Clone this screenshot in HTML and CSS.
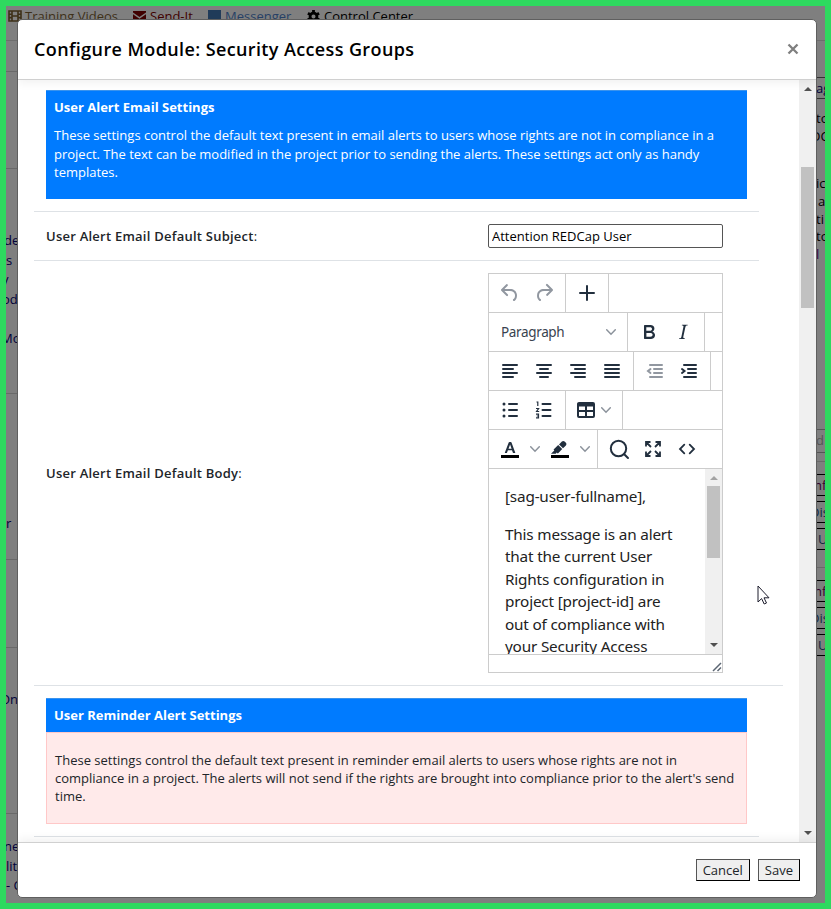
FILE: index.html
```html
<!DOCTYPE html>
<html lang="en">
<head>
<meta charset="utf-8">
<title>Configure Module</title>
<link rel="stylesheet" href="styles.css">
</head>
<body>
<div class="page">
  <nav class="topnav">
    <span class="nav-item training"><svg width="14" height="12" viewBox="0 0 14 12"><path d="M1 1h12v10H1zM4 1v10M10 1v10M4 6h6M1 4.3h3M1 7.6h3M10 4.3h3M10 7.6h3" fill="none" stroke="currentColor" stroke-width="1.6"/></svg>Training Videos</span>
    <span class="nav-item sendit"><svg width="13" height="10" viewBox="0 0 13 10"><path d="M0 0h13v1.6L6.500 6 0 1.600zM0 3.200l6.500 4.500L13 3.200V10H0z" fill="#400000"/></svg>Send-It</span>
    <span class="nav-item messenger"><i class="square"></i>Messenger</span>
    <span class="nav-item control"><svg width="13" height="13" viewBox="0 0 14 14"><circle cx="7" cy="7" r="3.700" fill="none" stroke="#000" stroke-width="3"/><path d="M7 0v3M7 11v3M1 3.500l2.500 1.500M13 3.500L10.500 5M1 10.500L3.500 9M13 10.500L10.500 9" stroke="#000" stroke-width="3"/></svg>Control Center</span>
  </nav>
  <div class="columns">
    <aside class="side left">
      <section class="l1"></section><section class="l2"></section><section class="l3"></section>
      <section class="l4"><p class="in3">de</p><p>s</p><p class="in4">y</p><p class="in4">oda</p><p></p><p class="in5">Mo</p></section>
      <section class="l5"><p>r</p></section><section class="l6"></section>
      <section class="l7"><p class="in6">On</p></section>
      <section class="l8"><p class="in3">ne</p><p>lit</p><p>- C</p></section>
    </aside>
    <aside class="side right">
      <section class="r1"></section>
      <div class="tab">ag</div>
      <section class="r2"><p>to</p><p class="in5">DC</p></section>
      <section class="r3"><p>ic</p><p class="in2">a</p><p>ti</p><p>to</p><p class="purple">l</p></section>
      <div class="field">d</div>
      <section class="r4"><b class="red in3">nf</b><b class="in6">Dis</b><b class="in2">U</b></section>
      <section class="r4"><b class="red in3">nf</b><b class="in6">Dis</b><b class="in2">U</b></section>
    </aside>
  </div>
</div>

<div class="modal">
  <header class="modal-header"><h1>Configure Module: Security Access Groups</h1><svg class="close" width="12" height="12" viewBox="0 0 12 12"><path d="M1.500 1.500l9 9M10.500 1.500l-9 9" stroke="#7f7f7f" stroke-width="2.300"/></svg></header>
  <div class="modal-body">
    <main class="content">
      <div class="row info">
        <div class="blue-box"><h2>User Alert Email Settings</h2><p>These settings control the default text present in email alerts to users whose rights are not in compliance in a<br>project. The text can be modified in the project prior to sending the alerts. These settings act only as handy<br>templates.</p></div>
      </div>
      <div class="row subject"><label><strong>User Alert Email Default Subject</strong>:</label><input type="text" value="Attention REDCap User"></div>
      <div class="row mail-body">
        <label><strong>User Alert Email Default Body</strong>:</label>
        <div class="editor">
          <div class="bar">
            <div class="group">
              <span class="btn off"><svg viewBox="0 0 24 24"><path d="M6.400 8H12c3.700 0 6.200 2 6.800 5.100.6 2.700-.4 5.600-2.300 6.800a1 1 0 01-1-1.800c1.100-.6 1.800-2.700 1.400-4.600-.5-2.100-2.100-3.500-4.900-3.500H6.400l3.300 3.300a1 1 0 11-1.400 1.400l-5-5a1 1 0 010-1.400l5-5a1 1 0 011.400 1.400L6.400 8z"/></svg></span>
              <span class="btn off"><svg viewBox="0 0 24 24"><path d="M17.600 10H12c-2.800 0-4.400 1.400-4.900 3.500-.4 2 .3 4 1.400 4.600a1 1 0 11-1 1.800c-2-1.200-2.900-4.100-2.300-6.800.6-3 3-5.100 6.800-5.100h5.600l-3.300-3.300a1 1 0 111.400-1.400l5 5a1 1 0 010 1.400l-5 5a1 1 0 01-1.400-1.400l3.300-3.300z"/></svg></span>
            </div>
            <div class="group"><span class="btn"><svg viewBox="0 0 24 24"><path class="ln" d="M12 5v14M5 12h14"/></svg></span></div>
          </div>
          <div class="bar">
            <div class="group"><span class="select">Paragraph<svg class="chev" viewBox="0 0 10 10"><path d="M.7 2.800L5 7.200l4.300-4.400"/></svg></span></div>
            <div class="group">
              <span class="btn"><svg viewBox="0 0 24 24"><path d="M7.800 19c-.3 0-.5 0-.6-.2l-.2-.5V5.700c0-.2 0-.4.2-.5l.6-.2h5c1.500 0 2.700.3 3.500 1 .7.6 1.100 1.400 1.100 2.500a3 3 0 01-.6 1.900c-.4.6-1 1-1.600 1.200.4.1.9.3 1.300.6s.8.7 1 1.200c.4.4.5 1 .5 1.600 0 1.300-.4 2.300-1.300 3-.8.7-2.100 1-3.800 1H7.800zm5-8.300c.6 0 1.200-.1 1.600-.5.4-.3.6-.7.6-1.300 0-1.100-.8-1.700-2.300-1.700H9.300v3.500h3.400zm.5 6c.7 0 1.300-.1 1.700-.4.4-.4.6-.9.6-1.500s-.2-1-.7-1.400c-.4-.3-1-.4-2-.4H9.400v3.800h4z"/></svg></span>
              <span class="btn"><svg viewBox="0 0 24 24"><path d="M16.700 4.700l-.1.900h-.3c-.6 0-1 0-1.400.3-.3.3-.4.6-.5 1.100l-2.100 9.800v.6c0 .5.400.8 1.400.8h.2l-.2.800H8l.2-.8h.2c1.100 0 1.800-.5 2-1.500l2-9.800.1-.5c0-.6-.4-.8-1.400-.8h-.3l.2-.9h5.800z"/></svg></span>
            </div>
          </div>
          <div class="bar">
            <div class="group">
              <span class="btn"><svg viewBox="0 0 24 24"><path class="ln" d="M5 6h14M5 10h10M5 14h14M5 18h10"/></svg></span>
              <span class="btn"><svg viewBox="0 0 24 24"><path class="ln" d="M5 6h14M8 10h8M5 14h14M8 18h8"/></svg></span>
              <span class="btn"><svg viewBox="0 0 24 24"><path class="ln" d="M5 6h14M9 10h10M5 14h14M9 18h10"/></svg></span>
              <span class="btn"><svg viewBox="0 0 24 24"><path class="ln" d="M5 6h14M5 10h14M5 14h14M5 18h14"/></svg></span>
            </div>
            <div class="group">
              <span class="btn off"><svg viewBox="0 0 24 24"><path class="ln" d="M7 6h12M11 10h8M11 14h8M7 18h12M7.500 10L5 12l2.500 2"/></svg></span>
              <span class="btn"><svg viewBox="0 0 24 24"><path class="ln" d="M7 6h12M11 10h8M11 14h8M7 18h12M5 10l2.500 2L5 14"/></svg></span>
            </div>
          </div>
          <div class="bar">
            <div class="group">
              <span class="btn"><svg viewBox="0 0 24 24"><path class="ln" d="M11 6h8M11 12h8M11 18h8"/><circle cx="6" cy="6" r="1.500"/><circle cx="6" cy="12" r="1.500"/><circle cx="6" cy="18" r="1.500"/></svg></span>
              <span class="btn"><svg viewBox="0 0 24 24"><path class="ln" d="M10.500 6h8M10.500 12h8M10.500 18h8"/><path class="thin" d="M4.500 4h1.300v4M4 10.500h2.600L4.600 13.500h2.600M4 16.200h2.500v3.600H4M4.700 18h1.700"/></svg></span>
            </div>
            <div class="group"><span class="btn wide"><svg viewBox="0 0 24 24"><path fill-rule="evenodd" d="M5 4h14a2 2 0 012 2v12a2 2 0 01-2 2H5a2 2 0 01-2-2V6c0-1.100.9-2 2-2zm0 4.500V12h6V8.500zm8 0V12h6V8.500zM5 14v4h6v-4zm8 0v4h6v-4z"/></svg><svg class="chev" viewBox="0 0 10 10"><path d="M.7 2.800L5 7.200l4.300-4.400"/></svg></span></div>
          </div>
          <div class="bar">
            <div class="group">
              <span class="btn split"><svg viewBox="0 0 24 24"><path fill="#000" d="M3 18h18v3H3z"/><path fill-rule="evenodd" d="M8.700 16H7.100c-.2 0-.3-.2-.2-.4l3.800-10c.1-.4.4-.6.8-.6h1.300c.4 0 .6.2.7.600l3.700 10c.1.2 0 .4-.3.4h-1.600l-.4-.300-.9-2.500H9.900L9 15.700zM12.100 7.600l-1.600 4.100h3.100z"/></svg><svg class="chev" viewBox="0 0 10 10"><path d="M.7 2.800L5 7.200l4.300-4.400"/></svg></span>
              <span class="btn split"><svg viewBox="0 0 24 24"><path fill="#000" d="M3 18h18v3H3z"/><path d="M7.700 16.700H3l3.300-3.300-.7-.8L10.200 8l4 4.100-4 4.200c-.2.2-.6.2-.8 0l-.6-.7zm5-7.600L11 7.400l2.900-2.900a2 2 0 012.700 0l1.300 1.300a2 2 0 010 2.700L15 11.300z"/></svg><svg class="chev" viewBox="0 0 10 10"><path d="M.7 2.800L5 7.200l4.300-4.400"/></svg></span>
            </div>
            <div class="group last">
              <span class="btn"><svg viewBox="0 0 24 24"><circle class="ln" cx="11.500" cy="11.500" r="7.700"/><path class="ln" d="M17.200 17.200L21 21"/></svg></span>
              <span class="btn"><svg viewBox="0 0 24 24"><path class="mid" d="M9.500 5H5v4.500M5.500 5.500L10 10M14.500 5H19v4.500M18.500 5.500L14 10M9.500 19H5v-4.500M5.500 18.500L10 14M14.500 19H19v-4.500M18.500 18.500L14 14"/></svg></span>
              <span class="btn"><svg viewBox="0 0 24 24"><path class="mid round" d="M9.300 7.700L5 12l4.300 4.300M14.700 7.700L19 12l-4.300 4.300"/></svg></span>
            </div>
          </div>
          <div class="edit-area">
            <div class="edit-text"><p>[sag-user-fullname],</p><p>This message is an alert<br>that the current User<br>Rights configuration in<br>project [project-id] are<br>out of compliance with<br>your Security Access</p></div>
            <div class="scroll"><i class="up pale"></i><i class="thumb"></i><i class="down"></i></div>
          </div>
          <div class="status"><svg width="10" height="10" viewBox="0 0 10 10"><path d="M1 9l8-8M5.500 9L9 5.500" stroke="#5c6673" stroke-width="1.500"/></svg></div>
        </div>
      </div>
      <div class="row reminder">
        <div class="blue-head"><h2>User Reminder Alert Settings</h2></div>
        <div class="pink-box">These settings control the default text present in reminder email alerts to users whose rights are not in<br>compliance in a project. The alerts will not send if the rights are brought into compliance prior to the alert's send<br>time.</div>
      </div>
    </main>
    <div class="scroll outer"><i class="up"></i><i class="thumb"></i><i class="down"></i></div>
  </div>
  <footer class="modal-footer"><button>Cancel</button><button>Save</button></footer>
</div>
<svg class="cursor" width="13" height="20" viewBox="0 0 13 20"><path d="M1 1v16l3.600-3.400 2.600 5.400 2.300-1-2.500-5.200H12z" fill="#fff" stroke="#1c1c2c"/></svg>
</body>
</html>
```
FILE: styles.css
```css
* { box-sizing: border-box; }
body { margin: 0; width: 831px; height: 909px; overflow: hidden; position: relative; font: 13px/18px "Open Sans", sans-serif; color: #212529; }
h1, h2, p { margin: 0; }
.page { width: 831px; height: 909px; border: 6px solid #2ed95f; background: #7f7f7f; overflow: hidden; display: flex; flex-direction: column; }
.topnav { flex: none; height: 35px; display: flex; padding: 0 0 0 2px; border-bottom: 1px solid #6d6d6d; }
.nav-item { display: flex; gap: 4px; height: 20px; align-items: center; white-space: nowrap; }
.training { width: 125px; color: #3e3018; gap: 3px; }
.sendit { width: 75px; color: #400000; }
.messenger { width: 99px; color: #263f66; }
.control { color: #000; }
.square { width: 13px; height: 12px; background: #203b59; }
.columns { flex: 1; min-height: 0; display: flex; justify-content: space-between; }
.side { width: 12px; overflow: hidden; color: #000038; white-space: nowrap; }
.side section { border-bottom: 1px solid #696969; }
.side p { height: 19.500px; line-height: 19px; }
.left section { overflow: hidden; }
.side .l1 { height: 0; border: 0; }
.l2 { height: 31px; }
.l3 { height: 97px; }
.l4 { height: 225px; padding-top: 62px; }
.l5 { height: 166px; padding-top: 120px; }
.l6 { height: 88px; }
.l7 { height: 166px; padding-top: 42px; }
.l8 { height: 95px; padding-top: 23px; }
.in2 { text-indent: 2px; }
.in3 { text-indent: -2px; }
.in4 { text-indent: -4px; }
.in5 { text-indent: -5px; }
.in6 { text-indent: -6px; }
.side.right { width: 9px; color: #000; }
.side .r1 { height: 36px; border: 0; }
.tab { height: 22px; border: solid #333; border-width: 1px 0; line-height: 20px; color: #000038; }
.side.right section.r2, .side.right section.r3 { border: 0; }
.right p { height: 17.800px; line-height: 18px; }
.r2 { height: 75px; padding-top: 10px; }
.r3 { height: 255px; }
.purple { color: #300040; }
.field { height: 24px; border: 1px solid #555; border-width: 1px 0; line-height: 21px; color: #555; margin-bottom: 8px; }
.r4 { height: 106px; padding-top: 12px; }
.side.right .r4 { border-top: 1px solid #696969; border-bottom: 0; }
.right b { display: block; height: 22px; margin-bottom: 5px; border: solid #000; border-width: 1px 0; line-height: 20px; font-weight: 400; color: #102840; }
.right b.red { color: #30002c; }

.modal { position: absolute; left: 17px; top: 19px; width: 800px; height: 879px; border: 1px solid #5f5f5f; border-radius: 5px; background: #fff; display: flex; flex-direction: column; overflow: hidden; }
.modal-header { height: 60px; border-bottom: 1px solid #d0d0d0; display: flex; align-items: center; justify-content: space-between; padding: 0 17px 0 16px; position: relative; box-shadow: 0 3px 9px rgba(0,0,0,.06); }
.modal-header h1 { font: 600 18px/27px "Open Sans", sans-serif; letter-spacing: .38px; color: #000; }
.close { margin-top: -2px; }
.modal-body { height: 762px; display: flex; overflow: hidden; }
.content { flex: 1; padding-left: 16px; }
.row { width: 725px; border-bottom: 1px solid #dee2e6; padding: 0 12px; display: flex; align-items: center; }
.row.info { height: 132px; align-items: flex-start; padding-top: 10px; }
.blue-box { width: 701px; height: 109px; background: #007bff; color: #fff; padding: 7px 8px; border-top: 1px solid #3a93ed; }
h2 { font: 700 13px/18px "Open Sans", sans-serif; color: #fff; }
.blue-box p { margin-top: 10px; line-height: 18.500px; white-space: nowrap; }
.row.subject { height: 49px; }
label { width: 442px; }
strong { font-weight: 600; letter-spacing: .24px; }
input { width: 235px; height: 24px; border: 1px solid #555; border-radius: 2px; padding: 0 3px 1px; font: 13px "Open Sans", sans-serif; color: #000; background: #fff; }
.row.mail-body { height: 425px; width: 749px; align-items: flex-start; padding-top: 12px; }
.mail-body label { padding-top: 191px; }
.editor { width: 235px; height: 400px; border: 1px solid #ccc; display: flex; flex-direction: column; background: #fff; }
.bar { height: 39px; border-bottom: 1px solid #ccc; display: flex; }
.group { display: flex; align-items: center; padding: 0 4px; border-right: 1px solid #ccc; box-sizing: content-box; }
.group.last { border: 0; }
.btn { width: 34px; height: 34px; display: flex; align-items: center; justify-content: center; color: #222f3e; }
.btn svg, .select svg { width: 24px; height: 24px; fill: currentColor; flex: none; }
.btn.off { color: #9197a0; }
.btn.wide { width: 48px; justify-content: flex-start; padding-left: 4px; gap: 3px; }
.btn.split { width: 50px; justify-content: flex-start; padding-left: 5px; gap: 8px; }
.btn .chev, .select .chev { width: 10px; height: 10px; fill: none; stroke: #8b929b; stroke-width: 1.500; stroke-linecap: round; }
.ln, .thin, .mid { fill: none; stroke: currentColor; stroke-width: 2; stroke-linecap: round; }
.thin { stroke-width: 1.200; stroke-linecap: butt; }
.mid { stroke-width: 1.800; stroke-linecap: butt; }
.round { stroke-linecap: round; }
.select { width: 130px; padding: 0 7px 0 8px; display: flex; align-items: center; justify-content: space-between; font: 13.500px/20px "Noto Sans", sans-serif; letter-spacing: -.35px; color: #39434f; }
.edit-area { height: 186px; display: flex; overflow: hidden; }
.edit-text { width: 216px; padding: 16px; font: 15.300px/22.400px "Noto Sans", sans-serif; letter-spacing: -.18px; color: #222; white-space: nowrap; }
.edit-text p { margin-bottom: 16px; }
.status { height: 18px; border-top: 1px solid #ccc; display: flex; align-items: flex-end; justify-content: flex-end; padding: 0; }
.scroll { width: 17px; background: #f0f0f0; display: flex; flex-direction: column; align-items: center; justify-content: space-between; padding: 7px 0; }
.scroll i { display: block; }
.up, .down { width: 0; height: 0; border: solid transparent; border-width: 0 4px 4px; border-bottom-color: #505050; }
.down { border-width: 4px 4px 0; border-top-color: #505050; }
.up.pale { border-bottom-color: #a3a3a3; }
.thumb { width: 13px; height: 72px; background: #c1c1c1; margin: 6px 0 auto; }
.outer .thumb { height: 141px; margin-top: 76px; }
.row.reminder { height: 151px; flex-direction: column; align-items: stretch; padding-top: 12px; }
.blue-head { height: 34px; background: #007bff; border-top: 1px solid #3a93ed; padding: 7px 8px; }
.pink-box { height: 92px; border: 1px solid #ffc8c8; background: #ffeaea; padding: 18px 8px; white-space: nowrap; }
.modal-footer { height: 55px; border-top: 1px solid #d0d0d0; display: flex; align-items: center; justify-content: flex-end; gap: 8px; padding-right: 16px; position: relative; box-shadow: 0 -3px 9px rgba(0,0,0,.06); }
button { height: 22px; padding: 0 6px; border: 1px solid #000; border-top-color: #555; border-left-color: #555; background: #efefef; font: 13px/18px "Open Sans", sans-serif; color: #212529; }
.cursor { position: absolute; left: 757px; top: 585px; }
```
